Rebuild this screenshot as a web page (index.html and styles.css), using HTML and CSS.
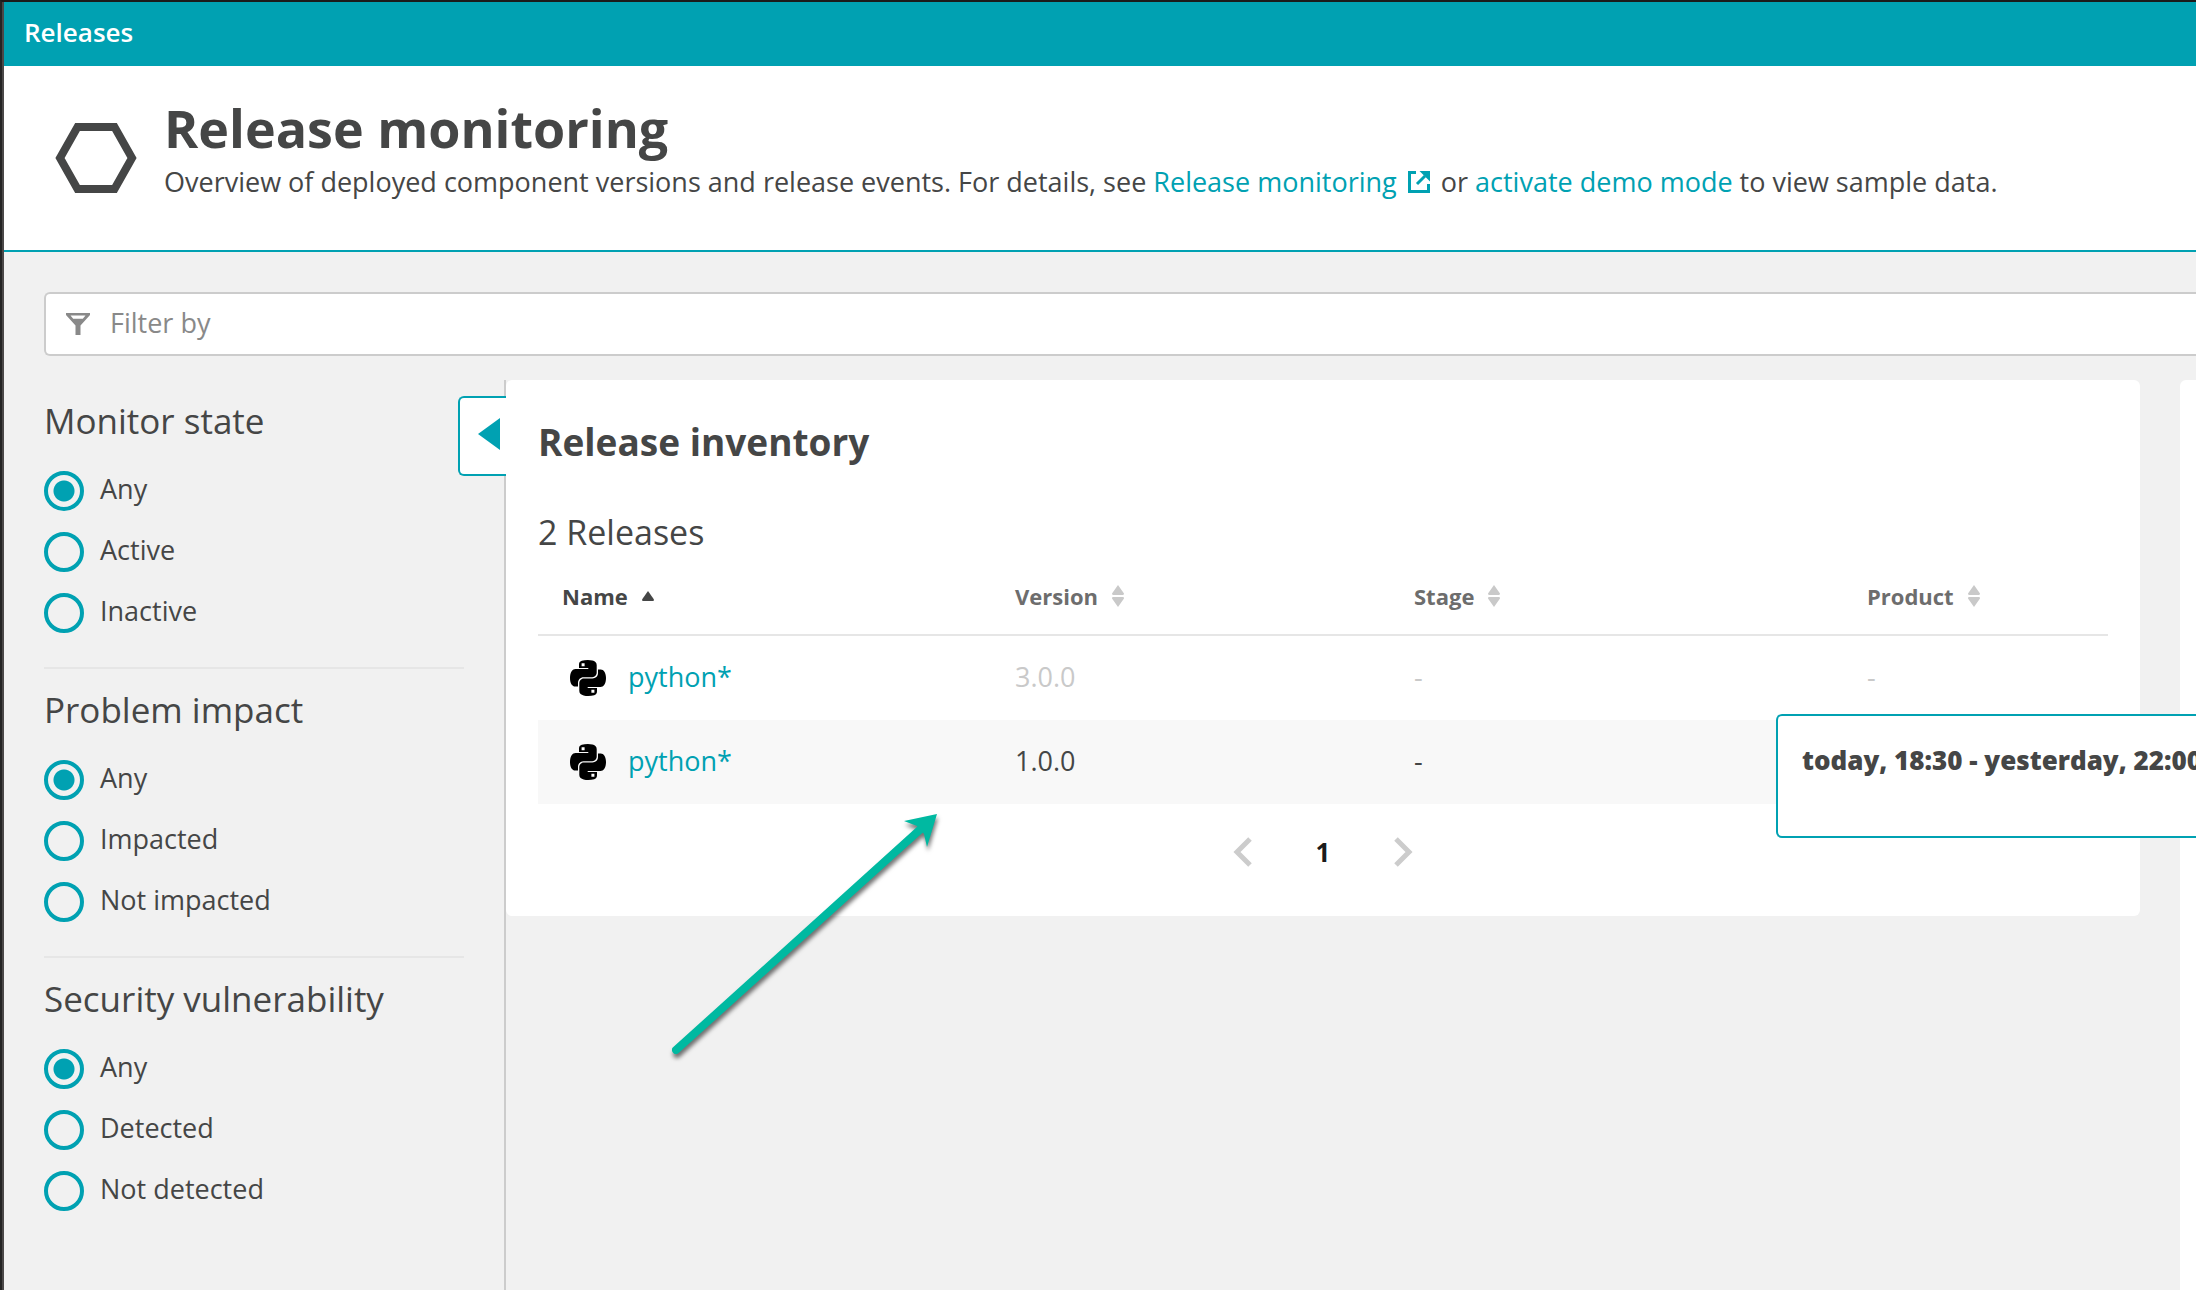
FILE: index.html
```html
<!DOCTYPE html>
<html lang="en">
<head>
<meta charset="utf-8">
<title>Release monitoring</title>
<link rel="stylesheet" href="styles.css">
</head>
<body>
<svg class="sprite" aria-hidden="true">
  <symbol id="sort" viewBox="0 0 12 22"><path d="M6 0 12 8.6Q12 10 11 10H1Q0 10 0 8.6ZM6 22 0 13.4Q0 12 1 12H11Q12 12 12 13.4Z"/></symbol>
  <symbol id="python" viewBox="0 0 36 36">
    <path d="M17.8 0c-2.200 0-4.300.3-6 .8C9.500 1.500 9 2.900 9 5v3h9.300v1H5.500C2.600 9 0 12 0 18c0 5.600 2.400 8.600 5.200 8.600H8v-3.700c0-3.300 2.500-5.700 5.500-5.700h8.800c2.600 0 4.400-2.200 4.400-4.700V5c0-2.500-2-3.900-4.300-4.400C21 .2 19.400 0 17.800 0Z"/>
    <path d="M18.200 36c2.200 0 4.300-.3 6-.8 2.300-.7 2.800-2.100 2.800-4.200v-3h-9.300v-1h12.800C33.400 27 36 24 36 18c0-5.600-2.400-8.600-5.200-8.600H28v3.700c0 3.300-2.500 5.300-5.500 5.300h-8.800c-2.600 0-4.400 2.400-4.400 4.900V31c0 2.500 2 3.900 4.300 4.400 1.400.4 3 .6 4.600.6Z"/>
    <path class="eye" d="M11.600 3.200h3v3h-3zM21.400 29.800h3v3h-3z"/>
  </symbol>
</svg>
<nav class="topbar"><a href="#releases">Releases</a></nav>
<header class="page-header">
  <svg class="hexagon" viewBox="0 0 82 70" aria-hidden="true"><path d="M22.500 4H59.500L77 35 59.500 66H22.500L5 35Z"/></svg>
  <div>
    <h1>Release monitoring</h1>
    <p>Overview of deployed component versions and release events. For details, see <a href="#docs">Release monitoring <svg class="external" viewBox="0 0 22 22" aria-hidden="true"><path d="M8 1.500H1.500V20.500H20.500V13M9 13 17 5" fill="none" stroke="currentColor" stroke-width="3"/><path d="M11.500 0H22V10.500Z" fill="currentColor"/></svg></a> or <a href="#demo">activate demo mode</a> to view sample data.</p>
  </div>
</header>
<label class="filter">
  <svg viewBox="0 0 24 22" aria-hidden="true"><path fill-rule="evenodd" d="M0 0H24V2L14.500 12.500V22H9.500V12.500L0 2ZM4.500 2.500 7.200 5.800H16.800L19.500 2.500Z"/></svg>
  <input type="text" placeholder="Filter by" aria-label="Filter by">
</label>
<main class="workspace">
  <aside class="sidebar">
    <fieldset>
      <legend>Monitor state</legend>
      <label><input type="radio" name="state" checked><span>Any</span></label>
      <label><input type="radio" name="state"><span>Active</span></label>
      <label><input type="radio" name="state"><span>Inactive</span></label>
    </fieldset>
    <fieldset>
      <legend>Problem impact</legend>
      <label><input type="radio" name="impact" checked><span>Any</span></label>
      <label><input type="radio" name="impact"><span>Impacted</span></label>
      <label><input type="radio" name="impact"><span>Not impacted</span></label>
    </fieldset>
    <fieldset>
      <legend>Security vulnerability</legend>
      <label><input type="radio" name="security" checked><span>Any</span></label>
      <label><input type="radio" name="security"><span>Detected</span></label>
      <label><input type="radio" name="security"><span>Not detected</span></label>
    </fieldset>
    <button class="collapse" type="button" aria-label="Collapse filters"><svg viewBox="0 0 22 32" aria-hidden="true"><path d="M22 0V32L0 16Z"/></svg></button>
  </aside>
  <section class="card inventory">
    <h2>Release inventory</h2>
    <h3>2 Releases</h3>
    <table>
      <colgroup><col class="col-name"><col class="col-version"><col class="col-stage"><col></colgroup>
      <thead>
        <tr>
          <th class="sorted">Name<svg viewBox="0 0 12 22" aria-hidden="true"><path d="M6 6 12 14.500Q12 16 11 16H1Q0 16 0 14.500Z"/></svg></th>
          <th>Version<svg aria-hidden="true"><use href="#sort"/></svg></th>
          <th>Stage<svg aria-hidden="true"><use href="#sort"/></svg></th>
          <th>Product<svg aria-hidden="true"><use href="#sort"/></svg></th>
        </tr>
      </thead>
      <tbody>
        <tr class="muted">
          <td><a href="#python-3"><svg aria-hidden="true"><use href="#python"/></svg>python*</a></td>
          <td>3.0.0</td><td>-</td><td>-</td>
        </tr>
        <tr>
          <td><a href="#python-1"><svg aria-hidden="true"><use href="#python"/></svg>python*</a></td>
          <td>1.0.0</td><td>-</td><td></td>
        </tr>
      </tbody>
    </table>
    <nav class="pager" aria-label="Pages">
      <button type="button" aria-label="Previous page"><svg viewBox="0 0 20 30" aria-hidden="true"><path d="M17 2 4 15 17 28"/></svg></button>
      <span>1</span>
      <button type="button" aria-label="Next page"><svg viewBox="0 0 20 30" aria-hidden="true"><path d="M3 2 16 15 3 28"/></svg></button>
    </nav>
  </section>
  <section class="card next-card"></section>
  <div class="timeframe">today, 18:30 - yesterday, 22:00</div>
  <svg class="arrow" viewBox="0 0 280 256" aria-hidden="true"><path d="M14 244 262 20" stroke="#00b9a1" stroke-width="8" stroke-linecap="round"/><path d="M275 8 242 15 255 20 262 28 265 41Z" fill="#00b9a1"/></svg>
</main>
</body>
</html>
```
FILE: styles.css
```css
* { box-sizing: border-box; }

:root {
  --teal: #00a1b2;
  --text: #454646;
  --line: #cccccc;
}

body {
  margin: 0;
  min-height: 100vh;
  display: flex;
  flex-direction: column;
  overflow-x: hidden;
  border-top: 2px solid #1b1b1b;
  border-left: 2px solid #242424;
  box-shadow: inset 2px 0 #4a4848;
  padding-left: 2px;
  background: #f1f1f1;
  color: var(--text);
  font: 27px/40px "Open Sans", "Noto Sans", sans-serif;
}

a { color: var(--teal); text-decoration: none; }
h1, h2, h3, p { margin: 0; }
button { padding: 0; border: 0; background: none; font: inherit; }
.sprite { position: absolute; width: 0; height: 0; }

.topbar {
  height: 64px;
  padding: 10px 20px;
  background: var(--teal);
  font-size: 26px;
  font-weight: 600;
}
.topbar a { color: #fff; }

.page-header {
  display: flex;
  gap: 27px;
  padding: 32px 52px 48px 51px;
  border-bottom: 2px solid var(--teal);
  background: #fff;
}
.hexagon {
  flex: none;
  width: 82px;
  height: 70px;
  margin-top: 25px;
  fill: none;
  stroke: var(--text);
  stroke-width: 8;
}
h1 { margin-bottom: 4px; font-size: 52px; line-height: 60px; font-weight: 700; }
.external { width: 22px; height: 22px; margin: 0 4px; vertical-align: -1px; }

.filter {
  display: flex;
  align-items: center;
  gap: 20px;
  height: 64px;
  margin: 40px 0 24px 40px;
  padding: 0 22px 0 20px;
  border: 2px solid var(--line);
  border-right: 0;
  border-radius: 6px 0 0 6px;
  background: #fff;
}
.filter svg { flex: none; width: 24px; height: 22px; fill: #898989; }
.filter input {
  flex: 1;
  min-width: 0;
  height: 56px;
  padding: 0 0 4px;
  border: 0;
  outline: 0;
  background: none;
  color: inherit;
  font: inherit;
}
.filter input::placeholder { color: #898989; opacity: 1; }

.workspace {
  position: relative;
  flex: 1;
  display: flex;
  align-items: flex-start;
}

.sidebar {
  position: relative;
  align-self: stretch;
  flex: none;
  width: 502px;
  padding: 0 40px;
  border-right: 2px solid var(--line);
}
fieldset {
  display: flex;
  flex-direction: column;
  gap: 21px;
  margin: 0;
  padding: 0 0 34px;
  border: 0;
  border-bottom: 2px solid #e6e6e6;
}
fieldset:nth-of-type(3) { border: 0; }
legend {
  padding: 17px 0 26px;
  font-size: 35px;
  line-height: 48px;
}
fieldset label { display: flex; align-items: center; gap: 16px; height: 40px; }
fieldset span { padding-bottom: 4px; }
fieldset input {
  appearance: none;
  width: 40px;
  height: 40px;
  margin: 0;
  border: 4px solid var(--teal);
  border-radius: 50%;
}
fieldset input:checked {
  background: radial-gradient(circle, var(--teal) 10px, transparent 11px);
}

.collapse {
  position: absolute;
  top: 16px;
  right: -2px;
  width: 48px;
  height: 80px;
  padding: 0 6px 4px 0;
  display: flex;
  align-items: center;
  justify-content: flex-end;
  border: 2px solid var(--teal);
  border-right: 0;
  border-radius: 6px 0 0 6px;
  background: #fff;
}
.collapse svg { width: 22px; height: 32px; fill: var(--teal); }

.card { border-radius: 6px; background: #fff; }
.inventory { flex: 1; min-width: 0; padding: 38px 32px; }
.next-card {
  align-self: stretch;
  flex: none;
  width: 16px;
  margin-left: 40px;
  border-radius: 6px 0 0 0;
}

h2 { font-size: 37px; line-height: 48px; font-weight: 700; }
h3 { margin-top: 42px; font-size: 34px; line-height: 48px; font-weight: 400; }

table {
  width: 100%;
  table-layout: fixed;
  border-collapse: separate;
  border-spacing: 0;
}
.col-name { width: 453px; }
.col-version { width: 399px; }
.col-stage { width: 453px; }
th {
  height: 80px;
  padding: 2px 24px 0;
  border-bottom: 2px solid #e6e6e6;
  color: #6d6d6d;
  font-size: 22px;
  font-weight: 700;
  text-align: left;
}
th svg {
  width: 12px;
  height: 22px;
  margin-left: 14px;
  vertical-align: -2px;
  fill: #c9c9c9;
}
th.sorted { color: var(--text); }
th.sorted svg { fill: var(--text); }
td { height: 84px; padding: 0 24px 2px; }
td a { display: flex; align-items: center; }
td svg { width: 36px; height: 36px; margin: 2px 22px 0 8px; fill: #000; }
.eye { fill: #fff; }
tbody tr:nth-child(even) { background: #f8f8f8; }
.muted td { color: #c9c9c9; }

.pager {
  display: flex;
  align-items: center;
  justify-content: center;
  gap: 63px;
  height: 40px;
  margin-top: 28px;
  margin-bottom: 6px;
  color: #1b1b1b;
  font-size: 26px;
  font-weight: 700;
}
.pager button { display: flex; }
.pager svg { width: 20px; height: 30px; fill: none; stroke: #ccc; stroke-width: 5; }

.timeframe {
  position: absolute;
  top: 334px;
  right: 0;
  width: 420px;
  height: 124px;
  padding: 24px;
  overflow: hidden;
  border: 2px solid var(--teal);
  border-right: 0;
  border-radius: 6px 0 0 6px;
  background: #fff;
  font-size: 26px;
  font-weight: 800;
  white-space: nowrap;
}

.arrow {
  position: absolute;
  top: 426px;
  left: 658px;
  width: 280px;
  height: 256px;
  filter: drop-shadow(1px 4px 2px rgb(0 0 0 / 55%));
  pointer-events: none;
}
```
